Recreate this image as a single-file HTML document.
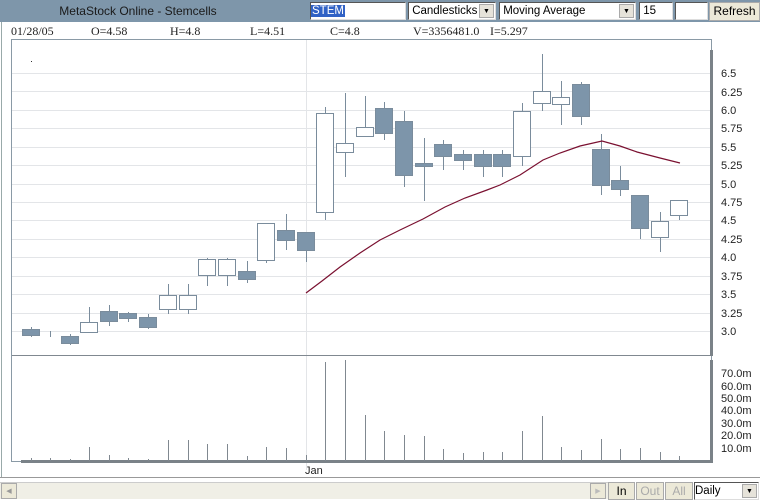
<!DOCTYPE html>
<html><head><meta charset="utf-8"><style>
*{margin:0;padding:0;box-sizing:border-box}
body{width:760px;height:500px;overflow:hidden;background:#fff;font-family:"Liberation Sans",sans-serif;position:relative}
.a{position:absolute}
.top{left:0;top:0;width:760px;height:22px;background:#7e96aa}
.title{left:0;top:4px;width:276px;text-align:center;font-size:12px;color:#1a1a1a}
.inp{background:#fff;border-top:1px solid #555;border-left:1px solid #555;border-right:1px solid #ddd;border-bottom:1px solid #ddd;font-size:11.5px;height:18px;top:2px;line-height:16px;white-space:nowrap;overflow:hidden}
.dd{position:absolute;right:1px;top:1px;width:15px;height:14px;background:#e6e3da;border:1px solid #aaa;font-size:7px;text-align:center;line-height:13px}
.btn{background:#ece9d8;border:1px solid #aaa;font-size:12px;text-align:center;line-height:16px}
.info{top:24px;font-family:"Liberation Serif",serif;font-size:12px;color:#222}
</style></head><body>
<div class="a top"></div>
<div class="a title">MetaStock Online - Stemcells</div>
<div class="a inp" style="left:310px;width:96px"><span style="background:#3162c5;color:#fff;padding:0 1px">STEM</span></div>
<div class="a inp" style="left:408px;width:88px">&nbsp;Candlesticks<div class="dd">▼</div></div>
<div class="a inp" style="left:499px;width:137px">&nbsp;Moving Average<div class="dd">▼</div></div>
<div class="a inp" style="left:639px;width:34px">&nbsp;15</div>
<div class="a inp" style="left:675px;width:33px"></div>
<div class="a btn" style="left:709px;top:2px;width:51px;height:19px;line-height:17px">Refresh</div>
<div class="a info" style="left:11px">01/28/05</div>
<div class="a info" style="left:91px">O=4.58</div>
<div class="a info" style="left:170px">H=4.8</div>
<div class="a info" style="left:250px">L=4.51</div>
<div class="a info" style="left:330px">C=4.8</div>
<div class="a info" style="left:413px">V=3356481.0</div>
<div class="a info" style="left:490px">I=5.297</div>
<svg class="a" style="left:0;top:0" width="760" height="500">
<line x1="1.5" y1="22" x2="1.5" y2="478" stroke="#9aa" />
<line x1="0" y1="477.5" x2="760" y2="477.5" stroke="#999"/>
<rect x="11.5" y="39.5" width="700" height="422" fill="#fff" stroke="#8a9aa6"/>
<g stroke="#e3e5e8">
<line x1="12" x2="711" y1="73.5" y2="73.5"/><line x1="12" x2="711" y1="91.5" y2="91.5"/><line x1="12" x2="711" y1="110.5" y2="110.5"/><line x1="12" x2="711" y1="128.5" y2="128.5"/><line x1="12" x2="711" y1="147.5" y2="147.5"/><line x1="12" x2="711" y1="165.5" y2="165.5"/><line x1="12" x2="711" y1="184.5" y2="184.5"/><line x1="12" x2="711" y1="202.5" y2="202.5"/><line x1="12" x2="711" y1="220.5" y2="220.5"/><line x1="12" x2="711" y1="239.5" y2="239.5"/><line x1="12" x2="711" y1="257.5" y2="257.5"/><line x1="12" x2="711" y1="276.5" y2="276.5"/><line x1="12" x2="711" y1="294.5" y2="294.5"/><line x1="12" x2="711" y1="313.5" y2="313.5"/><line x1="12" x2="711" y1="331.5" y2="331.5"/>
<line x1="306.5" x2="306.5" y1="40" y2="470"/>
</g>
<line x1="12" x2="711" y1="355.5" y2="355.5" stroke="#808890"/>
<rect x="710" y="50" width="3" height="306" fill="#7a8288"/>
<rect x="710" y="360" width="3" height="103" fill="#7a8288"/>
<rect x="21" y="460" width="692" height="3" fill="#7a8288"/>
<rect x="31" y="61" width="1" height="1" fill="#333"/>
<g stroke="#7a8c9c" stroke-width="1">
<line x1="31.5" y1="327" x2="31.5" y2="337"/><line x1="50.5" y1="331" x2="50.5" y2="337"/><line x1="70.5" y1="334" x2="70.5" y2="345"/><line x1="89.5" y1="307" x2="89.5" y2="332"/><line x1="109.5" y1="305" x2="109.5" y2="326"/><line x1="128.5" y1="312" x2="128.5" y2="322"/><line x1="148.5" y1="314" x2="148.5" y2="329"/><line x1="168.5" y1="284" x2="168.5" y2="314"/><line x1="188.5" y1="284" x2="188.5" y2="314"/><line x1="207.5" y1="258" x2="207.5" y2="286"/><line x1="227.5" y1="258" x2="227.5" y2="286"/><line x1="247.5" y1="261" x2="247.5" y2="283"/><line x1="266.5" y1="223" x2="266.5" y2="263"/><line x1="286.5" y1="214" x2="286.5" y2="250"/><line x1="306.5" y1="232" x2="306.5" y2="262"/>
<line x1="325.5" y1="107" x2="325.5" y2="220"/><line x1="345.5" y1="93" x2="345.5" y2="177"/><line x1="365.5" y1="96" x2="365.5" y2="136"/><line x1="384.5" y1="102" x2="384.5" y2="140"/><line x1="404.5" y1="111" x2="404.5" y2="187"/><line x1="424.5" y1="138" x2="424.5" y2="201"/><line x1="443.5" y1="140" x2="443.5" y2="170"/><line x1="463.5" y1="150" x2="463.5" y2="170"/><line x1="483.5" y1="150" x2="483.5" y2="177"/><line x1="502.5" y1="150" x2="502.5" y2="177"/><line x1="522.5" y1="103" x2="522.5" y2="166"/><line x1="542.5" y1="54" x2="542.5" y2="111"/><line x1="561.5" y1="81" x2="561.5" y2="125"/><line x1="581.5" y1="82" x2="581.5" y2="125"/><line x1="601.5" y1="134" x2="601.5" y2="195"/><line x1="620.5" y1="166" x2="620.5" y2="196"/><line x1="640.5" y1="195" x2="640.5" y2="239"/><line x1="660.5" y1="212" x2="660.5" y2="252"/><line x1="679.5" y1="200" x2="679.5" y2="220"/>
</g>
<g fill="#7d95aa" stroke="#7a8c9c">
<rect x="22.5" y="329.5" width="17" height="6"/><rect x="61.5" y="336.5" width="17" height="7"/><rect x="100.5" y="311.5" width="17" height="10"/><rect x="119.5" y="313.5" width="17" height="5"/><rect x="139.5" y="317.5" width="17" height="10"/><rect x="238.5" y="271.5" width="17" height="8"/><rect x="277.5" y="230.5" width="17" height="10"/><rect x="297.5" y="232.5" width="17" height="18"/>
<rect x="375.5" y="108.5" width="17" height="25"/><rect x="395.5" y="121.5" width="17" height="54"/><rect x="415.5" y="163.5" width="17" height="3"/><rect x="434.5" y="144.5" width="17" height="12"/><rect x="454.5" y="154.5" width="17" height="6"/><rect x="474.5" y="154.5" width="17" height="12"/><rect x="493.5" y="154.5" width="17" height="12"/><rect x="572.5" y="84.5" width="17" height="32"/><rect x="592.5" y="149.5" width="17" height="36"/><rect x="611.5" y="180.5" width="17" height="9"/><rect x="631.5" y="195.5" width="17" height="33"/>
</g>
<g fill="#fff" stroke="#7a8c9c">
<rect x="80.5" y="322.5" width="17" height="10"/><rect x="159.5" y="295.5" width="17" height="14"/><rect x="179.5" y="295.5" width="17" height="14"/><rect x="198.5" y="259.5" width="17" height="16"/><rect x="218.5" y="259.5" width="17" height="16"/><rect x="257.5" y="223.5" width="17" height="37"/>
<rect x="316.5" y="113.5" width="17" height="99"/><rect x="336.5" y="143.5" width="17" height="9"/><rect x="356.5" y="127.5" width="17" height="9"/><rect x="513.5" y="111.5" width="17" height="45"/><rect x="533.5" y="91.5" width="17" height="12"/><rect x="552.5" y="97.5" width="17" height="7"/><rect x="651.5" y="221.5" width="17" height="16"/><rect x="670.5" y="200.5" width="17" height="15"/>
</g>
<polyline fill="none" stroke="#7a1030" stroke-width="1.2" points="306,293 322,281 340,267 360,253 380,240 400,230 423,219 445,207 465,198 487,190 500,185 520,175 543,160 560,153 580,146 602,141 620,146 637,152 660,158 680,163"/>
<g stroke="#808890">
<line x1="31.5" y1="458" x2="31.5" y2="461"/><line x1="50.5" y1="458" x2="50.5" y2="461"/><line x1="70.5" y1="459" x2="70.5" y2="461"/><line x1="89.5" y1="447" x2="89.5" y2="461"/><line x1="109.5" y1="455" x2="109.5" y2="461"/><line x1="128.5" y1="458" x2="128.5" y2="461"/><line x1="148.5" y1="459" x2="148.5" y2="461"/><line x1="168.5" y1="440" x2="168.5" y2="461"/><line x1="188.5" y1="440" x2="188.5" y2="461"/><line x1="207.5" y1="444" x2="207.5" y2="461"/><line x1="227.5" y1="444" x2="227.5" y2="461"/><line x1="247.5" y1="456" x2="247.5" y2="461"/><line x1="266.5" y1="447" x2="266.5" y2="461"/><line x1="286.5" y1="448" x2="286.5" y2="461"/><line x1="306.5" y1="455" x2="306.5" y2="461"/><line x1="325.5" y1="362" x2="325.5" y2="461"/><line x1="345.5" y1="360" x2="345.5" y2="461"/><line x1="365.5" y1="415" x2="365.5" y2="461"/><line x1="384.5" y1="431" x2="384.5" y2="461"/><line x1="404.5" y1="435" x2="404.5" y2="461"/><line x1="424.5" y1="436" x2="424.5" y2="461"/><line x1="443.5" y1="449" x2="443.5" y2="461"/><line x1="463.5" y1="453" x2="463.5" y2="461"/><line x1="483.5" y1="452" x2="483.5" y2="461"/><line x1="502.5" y1="452" x2="502.5" y2="461"/><line x1="522.5" y1="431" x2="522.5" y2="461"/><line x1="542.5" y1="416" x2="542.5" y2="461"/><line x1="561.5" y1="447" x2="561.5" y2="461"/><line x1="581.5" y1="450" x2="581.5" y2="461"/><line x1="601.5" y1="439" x2="601.5" y2="461"/><line x1="620.5" y1="449" x2="620.5" y2="461"/><line x1="640.5" y1="448" x2="640.5" y2="461"/><line x1="660.5" y1="452" x2="660.5" y2="461"/><line x1="679.5" y1="456" x2="679.5" y2="461"/>
</g>
<g font-family="Liberation Sans,sans-serif" font-size="11" fill="#222">
<text x="721" y="77">6.5</text><text x="721" y="96">6.25</text><text x="721" y="114">6.0</text><text x="721" y="132">5.75</text><text x="721" y="151">5.5</text><text x="721" y="169">5.25</text><text x="721" y="188">5.0</text><text x="721" y="206">4.75</text><text x="721" y="224">4.5</text><text x="721" y="243">4.25</text><text x="721" y="261">4.0</text><text x="721" y="280">3.75</text><text x="721" y="298">3.5</text><text x="721" y="317">3.25</text><text x="721" y="335">3.0</text>
<text x="721" y="377">70.0m</text><text x="721" y="390">60.0m</text><text x="721" y="402">50.0m</text><text x="721" y="414">40.0m</text><text x="721" y="427">30.0m</text><text x="721" y="439">20.0m</text><text x="721" y="452">10.0m</text>
<text x="305" y="474">Jan</text>
</g>
</svg>
<div class="a" style="left:0;top:482px;width:608px;height:17px;background:#f0efe6;border-top:1px solid #ccc"></div>
<div class="a btn" style="left:1px;top:483px;width:16px;height:16px;font-size:7px;color:#999">◀</div>
<div class="a btn" style="left:590px;top:483px;width:16px;height:16px;font-size:7px;color:#bbb">▶</div>
<div class="a btn" style="left:608px;top:482px;width:27px;height:18px">In</div>
<div class="a btn" style="left:636px;top:482px;width:28px;height:18px;color:#aaa">Out</div>
<div class="a btn" style="left:665px;top:482px;width:28px;height:18px;color:#aaa">All</div>
<div class="a inp" style="left:694px;top:482px;width:65px;height:18px">Daily<div class="dd">▼</div></div>
</body></html>
